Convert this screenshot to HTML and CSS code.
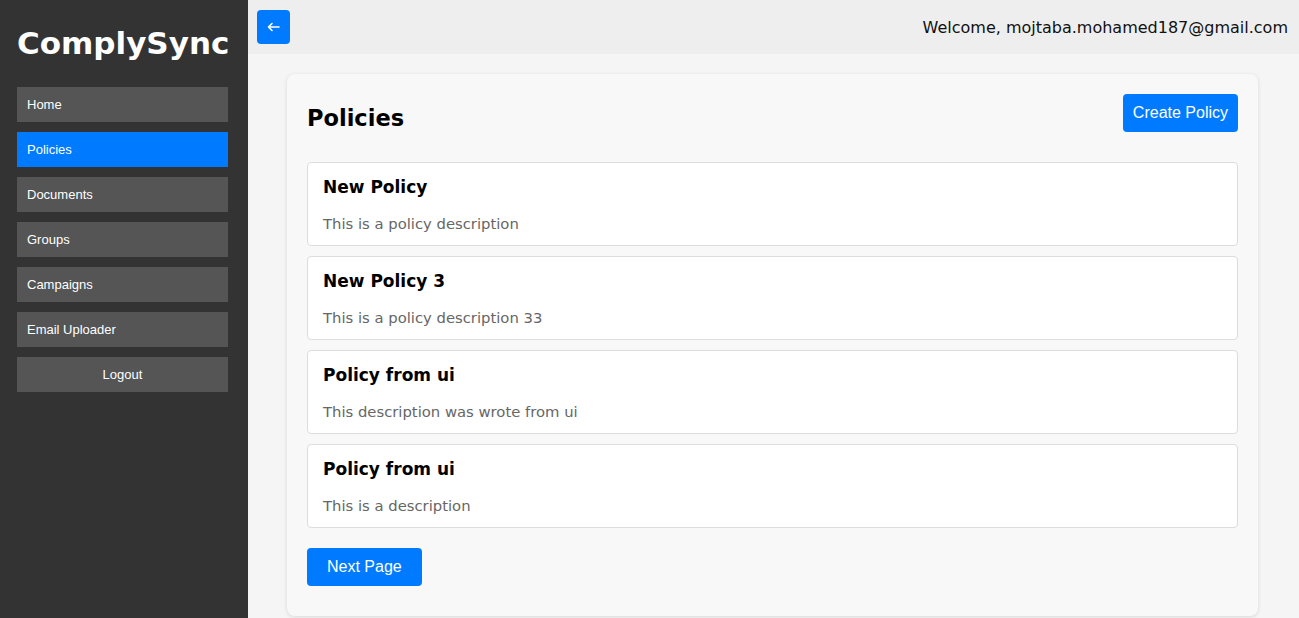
FILE: index.html
```html
<!DOCTYPE html>
<html lang="en">
<head>
<meta charset="utf-8">
<title>ComplySync - Policies</title>
<link rel="stylesheet" href="styles.css">
</head>
<body>
<div class="app">
  <aside class="sidebar">
    <h1 class="brand">ComplySync</h1>
    <nav class="nav">
      <a class="nav-item" href="#">Home</a>
      <a class="nav-item active" href="#">Policies</a>
      <a class="nav-item" href="#">Documents</a>
      <a class="nav-item" href="#">Groups</a>
      <a class="nav-item" href="#">Campaigns</a>
      <a class="nav-item" href="#">Email Uploader</a>
      <button class="nav-item logout" type="button">Logout</button>
    </nav>
  </aside>
  <div class="content">
    <header class="topbar">
      <button class="back-btn" type="button" aria-label="Back">
        <svg width="13" height="10" viewBox="0 0 13 10" fill="none" stroke="#fff" stroke-width="1.6" stroke-linecap="round" stroke-linejoin="round"><path d="M12 5H1.5M5 1.5L1.5 5 5 8.5"/></svg>
      </button>
      <span class="welcome">Welcome, mojtaba.mohamed187@gmail.com</span>
    </header>
    <main class="main">
      <section class="card">
        <div class="card-head">
          <h2 class="page-title">Policies</h2>
          <button class="btn btn-create" type="button">Create Policy</button>
        </div>
        <ul class="policy-list">
          <li class="policy">
            <h3 class="policy-title">New Policy</h3>
            <p class="policy-desc">This is a policy description</p>
          </li>
          <li class="policy">
            <h3 class="policy-title">New Policy 3</h3>
            <p class="policy-desc">This is a policy description 33</p>
          </li>
          <li class="policy">
            <h3 class="policy-title">Policy from ui</h3>
            <p class="policy-desc">This description was wrote from ui</p>
          </li>
          <li class="policy">
            <h3 class="policy-title">Policy from ui</h3>
            <p class="policy-desc">This is a description</p>
          </li>
        </ul>
        <button class="btn btn-next" type="button">Next Page</button>
      </section>
    </main>
  </div>
</div>
</body>
</html>
```
FILE: styles.css
```css
* { box-sizing: border-box; }
html, body { margin: 0; padding: 0; height: 100%; }
body {
  font-family: "DejaVu Sans", "Liberation Sans", sans-serif;
  background: #f5f5f5;
  overflow: hidden;
}
.app { display: flex; height: 618px; }

.sidebar {
  width: 248px;
  flex: none;
  background: #333333;
  padding: 19px 20px 0 17px;
}
.brand {
  margin: 0 0 20px;
  color: #fff;
  font-size: 31px;
  line-height: 48px;
  font-weight: 700;
  text-align: center;
  white-space: nowrap;
}
.nav { display: flex; flex-direction: column; gap: 10px; }
.nav-item {
  display: block;
  background: #555555;
  color: #fff;
  font-family: "Liberation Sans", Arial, sans-serif;
  font-size: 13px;
  line-height: 15px;
  padding: 10px;
  text-decoration: none;
  border: 0;
  text-align: left;
}
.nav-item.active { background: #007bff; }
.nav-item.logout { text-align: center; cursor: pointer; width: 100%; }

.content { flex: 1; display: flex; flex-direction: column; min-width: 0; }
.topbar {
  height: 54px;
  flex: none;
  background: #eeeeee;
  display: flex;
  align-items: center;
  justify-content: space-between;
  padding: 0 11px 0 9px;
}
.back-btn {
  width: 33px;
  height: 34px;
  border: 0;
  border-radius: 4px;
  background: #007bff;
  display: flex;
  align-items: center;
  justify-content: center;
  padding: 0;
}
.welcome { color: #111; font-size: 16px; }

.main { flex: 1; padding: 20px 41px 0 39px; background: #f5f5f5; }
.card {
  background: #f8f8f8;
  border-radius: 8px;
  box-shadow: 0 1px 4px rgba(0,0,0,0.12);
  padding: 20px 20px 30px;
}
.card-head {
  display: flex;
  justify-content: space-between;
  align-items: flex-start;
  margin-bottom: 26px;
}
.page-title {
  margin: 6px 0 0;
  font-size: 22.5px;
  line-height: 36px;
  font-weight: 700;
  color: #000;
}
.btn {
  background: #007bff;
  color: #fff;
  border: 0;
  border-radius: 4px;
  font-family: "Liberation Sans", Arial, sans-serif;
  font-size: 16px;
  line-height: 18px;
  padding: 10px;
}
.btn-create { padding: 10px 10px; }
.btn-next { padding: 10px 20px; margin-top: 20px; }

.policy-list { list-style: none; margin: 0; padding: 0; display: flex; flex-direction: column; gap: 10px; }
.policy {
  background: #fff;
  border: 1px solid #dddddd;
  border-radius: 4px;
  padding: 12px 15px 10px;
  height: 84px;
}
.policy-title {
  margin: 0 0 12px;
  font-size: 17px;
  line-height: 25px;
  font-weight: 700;
  color: #000;
}
.policy-desc {
  margin: 0;
  font-size: 14.8px;
  line-height: 24px;
  color: #666;
}
```
